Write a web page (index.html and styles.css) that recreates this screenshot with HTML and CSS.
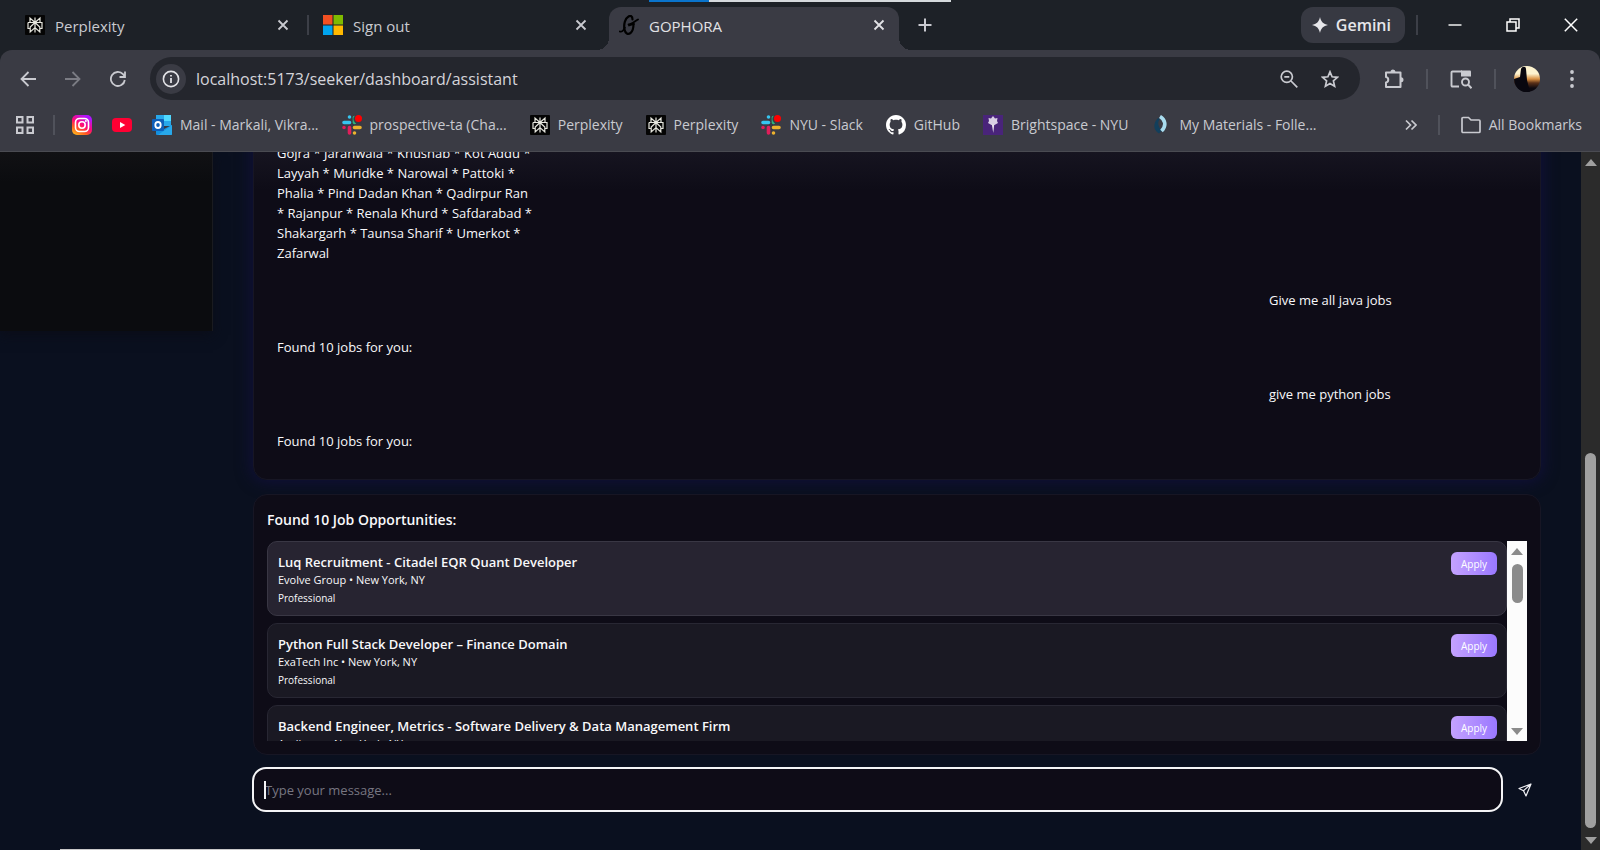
FILE: index.html
```html
<!DOCTYPE html>
<html lang="en">
<head>
<meta charset="utf-8">
<title>GOPHORA</title>
<link rel="stylesheet" href="styles.css">
</head>
<body>
<svg class="symbols" aria-hidden="true">
  <symbol id="perplexity" viewBox="0 0 20 20"><rect width="20" height="20" rx="1" fill="#050505"/><path d="M10 2.500v15M10 7.500 5 3v4.500M10 7.500 15 3v4.500M3 7.500h14v6h-2.200M3 7.500v6h2.200M10 7.500l-4.800 4.600V17L10 12.600M10 7.500l4.800 4.600V17L10 12.600" fill="none" stroke="#e8e8e0" stroke-width="1.200"/></symbol>
  <symbol id="slack" viewBox="0 0 20 20"><g stroke-width="3.600" stroke-linecap="round"><path d="M2 7.500h5.500M7.500 2h.01" stroke="#36c5f0"/><path d="M12.500 2.500v5" stroke="#2eb67d"/><path d="M12.500 12.500H18M12.500 18h.01" stroke="#ecb22e"/><path d="M7.500 12.500V18M2 12.500h.01" stroke="#e01e5a"/></g><circle cx="16" cy="4" r="4.600" fill="#3a3b44"/><circle cx="16.500" cy="3.500" r="3.500" fill="#f00"/></symbol>
  <symbol id="close" viewBox="0 0 12 12"><path d="M1.500 1.500l9 9M10.500 1.500l-9 9" fill="none" stroke="currentColor" stroke-width="1.800"/></symbol>
  <symbol id="arrow-up" viewBox="0 0 12 7"><path d="M6 0l6 7H0z" fill="currentColor"/></symbol>
  <symbol id="arrow-down" viewBox="0 0 12 7"><path d="M6 7l6-7H0z" fill="currentColor"/></symbol>
</svg>

<div class="window-progress"><span class="progress-done"></span></div>

<header class="browser">
  <div class="tab-strip">
    <div class="tab">
      <svg class="icon20"><use href="#perplexity"/></svg>
      <span class="tab-title">Perplexity</span>
      <button class="plain" aria-label="Close tab"><svg class="icon12"><use href="#close"/></svg></button>
    </div>
    <div class="tab tab-divided">
      <svg class="icon20" viewBox="0 0 20 20"><path fill="#f25022" d="M0 0h9.500v9.500H0z"/><path fill="#7fba00" d="M10.500 0H20v9.500h-9.500z"/><path fill="#00a4ef" d="M0 10.500h9.500V20H0z"/><path fill="#ffb900" d="M10.500 10.500H20V20h-9.500z"/></svg>
      <span class="tab-title">Sign out</span>
      <button class="plain" aria-label="Close tab"><svg class="icon12"><use href="#close"/></svg></button>
    </div>
    <div class="tab tab-active">
      <svg class="icon20" viewBox="0 0 20 20" fill="none" stroke="#000" stroke-linecap="round"><path d="M13.500 4.500C13.500 1 11.500.2 9.500 1.500 6 3.500 4.500 9.500 5.500 14.500c.8 4 3.500 5.300 6 3.500 2-1.500 3-5 3-9" stroke-width="2.200"/><path d="M.8 16.500c2 .8 4-1.300 5-4M9.500 9.500c3 .2 6-3 9.500-5M10 10.500l5-1.500" stroke-width="1.800"/></svg>
      <span class="tab-title">GOPHORA</span>
      <button class="plain" aria-label="Close tab"><svg class="icon12"><use href="#close"/></svg></button>
    </div>
    <button class="plain new-tab" aria-label="New tab"><svg class="icon14" viewBox="0 0 14 14"><path d="M7 .5v13M.5 7h13" stroke="currentColor" stroke-width="2"/></svg></button>
    <div class="window-tools">
      <button class="gemini"><svg class="icon16" viewBox="0 0 16 16"><path d="M8 0c.8 4.500 3.500 7.200 8 8-4.500.8-7.200 3.500-8 8-.8-4.500-3.500-7.200-8-8 4.500-.8 7.200-3.500 8-8z" fill="#e6e6ea"/></svg>Gemini</button>
      <span class="rule"></span>
      <div class="window-buttons">
        <button class="plain" aria-label="Minimise"><svg class="icon14" viewBox="0 0 14 14"><path d="M.5 7h13" stroke="#fff" stroke-width="1.400"/></svg></button>
        <button class="plain" aria-label="Restore"><svg class="icon14" viewBox="0 0 14 14" fill="none" stroke="#fff" stroke-width="1.500"><path d="M1 4h9v9H1zM4 4V1h9v9h-3"/></svg></button>
        <button class="plain" aria-label="Close window"><svg class="icon14" viewBox="0 0 14 14"><path d="M.8.800l12.400 12.400M13.200.8.800 13.200" stroke="#fff" stroke-width="1.500"/></svg></button>
      </div>
    </div>
  </div>

  <div class="toolbar">
    <nav class="history" aria-label="History">
      <button class="plain" aria-label="Back"><svg class="icon16" viewBox="0 0 16 16"><path d="M16 8H2M8.500 1 1.500 8l7 7" fill="none" stroke="currentColor" stroke-width="1.800"/></svg></button>
      <button class="plain faded" aria-label="Forward"><svg class="icon16" viewBox="0 0 16 16"><path d="M0 8h14M7.500 1l7 7-7 7" fill="none" stroke="currentColor" stroke-width="1.800"/></svg></button>
      <button class="plain" aria-label="Reload"><svg class="icon16" viewBox="0 0 16 16"><path d="M14.800 9A7 7 0 1 1 13 3.200L14.500 5M15 .5V6H9.500" fill="none" stroke="currentColor" stroke-width="1.800"/></svg></button>
    </nav>
    <div class="omnibox">
      <button class="plain site-info" aria-label="Site information"><svg class="icon18" viewBox="0 0 18 18"><circle cx="9" cy="9" r="7.600" fill="none" stroke="currentColor" stroke-width="1.600"/><path d="M9 8v5M9 5v1.600" stroke="currentColor" stroke-width="1.800"/></svg></button>
      <input class="address" type="text" aria-label="Address" value="localhost:5173/seeker/dashboard/assistant">
      <button class="plain" aria-label="Zoom out"><svg class="icon18" viewBox="0 0 18 18" fill="none" stroke="currentColor" stroke-width="1.700"><circle cx="6.800" cy="6.800" r="5.600"/><path d="M11 11l6.300 6.300M4.300 6.800h5"/></svg></button>
      <button class="plain" aria-label="Bookmark this page"><svg class="icon18" viewBox="0 0 18 18"><path d="M9 1.800l2.100 5 5.400.5-4.100 3.600 1.200 5.300L9 13.400l-4.600 2.800 1.200-5.300L1.500 7.300l5.400-.5z" fill="none" stroke="currentColor" stroke-width="1.700"/></svg></button>
    </div>
    <div class="toolbar-actions">
      <button class="plain" aria-label="Extensions"><svg class="icon20" viewBox="0 0 20 20"><path d="M2 3.500h14.500V18H2v-4.500c3-.5 3-5 0-5.500z" fill="none" stroke="currentColor" stroke-width="2" stroke-linejoin="round"/><path d="M6.500 3a2.500 2.500 0 0 1 5 0zM17 8.300a2.500 2.500 0 0 1 0 5z" fill="currentColor"/></svg></button>
      <span class="rule"></span>
      <button class="plain" aria-label="Search this page"><svg class="icon22" viewBox="0 0 22 20"><path d="M9 17.500H2.500a1 1 0 0 1-1-1v-13a1 1 0 0 1 1-1H12" fill="none" stroke="currentColor" stroke-width="1.900"/><path d="M11 1.500h9a1 1 0 0 1 1 1v5H11z" fill="currentColor"/><circle cx="15.500" cy="13" r="3.500" fill="none" stroke="currentColor" stroke-width="1.900"/><path d="M18 15.500l3.500 3.700" stroke="currentColor" stroke-width="2"/></svg></button>
      <span class="rule"></span>
      <button class="plain avatar" aria-label="Profile"><svg class="avatar-picture" viewBox="0 0 26 26"><defs><linearGradient id="dusk" x1="0" y1="0" x2="0" y2="1"><stop offset=".3" stop-color="#fdf3cf"/><stop offset=".5" stop-color="#d99143"/><stop offset=".65" stop-color="#5a3018"/><stop offset=".85" stop-color="#0c0910"/></linearGradient></defs><path fill="url(#dusk)" d="M0 0h26v26H0z"/><path fill="#08070f" d="M0 13l6-2 1-8c1-3 5-3 5 0l1 11 3 12H0z"/></svg></button>
      <button class="plain" aria-label="Menu"><svg class="dots" viewBox="0 0 4 18" fill="currentColor"><circle cx="2" cy="2" r="1.900"/><circle cx="2" cy="9" r="1.900"/><circle cx="2" cy="16" r="1.900"/></svg></button>
    </div>
  </div>

  <nav class="bookmarks" aria-label="Bookmarks">
    <button class="plain" aria-label="Tab groups"><svg class="icon18" viewBox="0 0 18 18" fill="none" stroke="currentColor" stroke-width="2"><path d="M1 1h5.500v5.500H1zM11.500 1H17v5.500h-5.500zM1 11.500h5.500V17H1zM11.500 11.500H17V17h-5.500z"/></svg></button>
    <span class="rule"></span>
    <a class="bookmark" href="#" aria-label="Instagram"><svg class="icon20" viewBox="0 0 20 20"><defs><linearGradient id="ig" x1="0" y1="1" x2=".6" y2="0"><stop offset="0" stop-color="#ffd21f"/><stop offset=".35" stop-color="#ff5a1f"/><stop offset=".6" stop-color="#ff0a78"/><stop offset="1" stop-color="#b014ff"/></linearGradient></defs><rect width="20" height="20" rx="5" fill="url(#ig)"/><g fill="none" stroke="#fff" stroke-width="1.600"><rect x="3.500" y="3.500" width="13" height="13" rx="4"/><circle cx="10" cy="10" r="3.200"/></g><circle cx="13.900" cy="6.100" r="1" fill="#fff"/></svg></a>
    <a class="bookmark" href="#" aria-label="YouTube"><svg class="icon20" viewBox="0 0 20 20"><rect y="3" width="20" height="14" rx="4" fill="#ff0033"/><path d="M8 7l5.300 3L8 13z" fill="#fff"/></svg></a>
    <a class="bookmark bookmark-titled" href="#"><svg class="icon20" viewBox="0 0 20 20"><path d="M4 0h15v11H4z" fill="#28a8ea"/><path d="M12 0h7v6h-7z" fill="#50d9ff"/><path d="M4 6h8v6H4z" fill="#0364b8"/><path d="M4 10l8 4 8-4v9a1 1 0 0 1-1 1H5a1 1 0 0 1-1-1z" fill="#1490df"/><path d="M20 10v9a1 1 0 0 1-1 1H6z" fill="#28a8ea"/><rect y="4" width="12" height="12" rx="1" fill="#0f5fb8"/><ellipse cx="6" cy="10" rx="2.700" ry="3" fill="none" stroke="#fff" stroke-width="1.800"/></svg>Mail - Markali, Vikra...</a>
    <a class="bookmark bookmark-titled" href="#"><svg class="icon20"><use href="#slack"/></svg>prospective-ta (Cha...</a>
    <a class="bookmark bookmark-titled" href="#"><svg class="icon20"><use href="#perplexity"/></svg>Perplexity</a>
    <a class="bookmark bookmark-titled" href="#"><svg class="icon20"><use href="#perplexity"/></svg>Perplexity</a>
    <a class="bookmark bookmark-titled" href="#"><svg class="icon20"><use href="#slack"/></svg>NYU - Slack</a>
    <a class="bookmark bookmark-titled" href="#"><svg class="icon20" viewBox="0 0 16 16"><path fill="#fff" d="M8 0C3.580 0 0 3.580 0 8c0 3.540 2.290 6.530 5.470 7.590.4.070.55-.17.55-.38 0-.19-.01-.82-.01-1.490-2.010.37-2.530-.49-2.690-.94-.09-.23-.48-.94-.82-1.130-.28-.15-.68-.52-.01-.53.630-.01 1.080.58 1.230.82.720 1.210 1.870.87 2.330.66.070-.52.280-.87.510-1.070-1.780-.2-3.640-.89-3.640-3.950 0-.87.310-1.590.82-2.150-.08-.2-.36-1.020.080-2.120 0 0 .67-.21 2.200.82.640-.18 1.320-.27 2-.27s1.360.09 2 .27c1.530-1.040 2.200-.82 2.200-.82.440 1.100.16 1.920.080 2.120.51.560.82 1.270.82 2.150 0 3.070-1.870 3.750-3.650 3.950.29.250.54.730.54 1.480 0 1.070-.01 1.930-.01 2.200 0 .21.150.46.550.38A8.010 8.010 0 0 0 16 8c0-4.420-3.580-8-8-8z"/></svg>GitHub</a>
    <a class="bookmark bookmark-titled" href="#"><svg class="icon20" viewBox="0 0 20 20"><path fill="#49247a" d="M0 0h20v20H0z"/><path d="M10 1l2 2.500 2.500-.5-.5 3 1 2-3.500 2h-3L5 8l1-2-.5-3L8 3.500z" fill="#d8cfe4"/><path d="M8.800 9.500h2.400L10.300 18z" fill="#e8e2ee"/></svg>Brightspace - NYU</a>
    <a class="bookmark bookmark-titled" href="#"><svg class="icon20" viewBox="0 0 20 20"><path d="M7 3C2 8 2 15 8 18.500l3-3C7 12 6 7 9 4z" fill="#123f5c"/><path d="M9 1.500c5 3 7 9 1.500 14.500" fill="none" stroke="#a9dcef" stroke-width="3.600"/></svg>My Materials - Folle...</a>
    <div class="bookmarks-end">
      <button class="plain" aria-label="More bookmarks"><svg class="icon12" viewBox="0 0 12 12"><path d="M1 1.500 5.500 6 1 10.500M6.500 1.500 11 6l-4.500 4.500" fill="none" stroke="currentColor" stroke-width="1.700"/></svg></button>
      <span class="rule"></span>
      <a class="bookmark" href="#"><svg class="icon20" viewBox="0 0 20 20"><path d="M1 3.500a1 1 0 0 1 1-1h5.500L10 5h8a1 1 0 0 1 1 1v10.500a1 1 0 0 1-1 1H2a1 1 0 0 1-1-1z" fill="none" stroke="currentColor" stroke-width="1.700"/></svg>All Bookmarks</a>
    </div>
  </nav>
</header>

<div class="viewport">
  <aside class="sidebar"></aside>
  <main class="assistant">
    <section class="panel chat" aria-label="Conversation">
      <p class="message">Gojra * Jaranwala * Khushab * Kot Addu *<br>Layyah * Muridke * Narowal * Pattoki *<br>Phalia * Pind Dadan Khan * Qadirpur Ran<br>* Rajanpur * Renala Khurd * Safdarabad *<br>Shakargarh * Taunsa Sharif * Umerkot *<br>Zafarwal</p>
      <p class="message message-own">Give me all java jobs</p>
      <p class="message">Found 10 jobs for you:</p>
      <p class="message message-own">give me python jobs</p>
      <p class="message">Found 10 jobs for you:</p>
    </section>

    <section class="panel jobs">
      <h2 class="jobs-heading">Found 10 Job Opportunities:</h2>
      <div class="jobs-frame">
        <div class="jobs-list">
          <article class="job job-hover">
            <div><h3 class="job-title">Luq Recruitment - Citadel EQR Quant Developer</h3><p class="job-place">Evolve Group • New York, NY</p><p class="job-level">Professional</p></div>
            <button class="apply">Apply</button>
          </article>
          <article class="job">
            <div><h3 class="job-title">Python Full Stack Developer – Finance Domain</h3><p class="job-place">ExaTech Inc • New York, NY</p><p class="job-level">Professional</p></div>
            <button class="apply">Apply</button>
          </article>
          <article class="job">
            <div><h3 class="job-title">Backend Engineer, Metrics - Software Delivery &amp; Data Management Firm</h3><p class="job-place">Andiamo • New York, NY</p></div>
            <button class="apply">Apply</button>
          </article>
        </div>
        <div class="scrollbar scrollbar-light"><svg class="scroll-arrow"><use href="#arrow-up"/></svg><div class="track"><span class="thumb thumb-list"></span></div><svg class="scroll-arrow"><use href="#arrow-down"/></svg></div>
      </div>
    </section>

    <form class="composer">
      <div class="composer-field"><input class="composer-input" type="text" aria-label="Message" placeholder="Type your message..."><span class="caret"></span></div>
      <button class="plain send" type="button" aria-label="Send"><svg class="icon14" viewBox="0 0 14 14"><path d="M13 1 1 5.500l4.500 2.200L8 13zM13 1 5.500 7.700" fill="none" stroke="#f0f0f4" stroke-width="1.200" stroke-linejoin="round"/></svg></button>
    </form>
  </main>
  <div class="scrollbar"><svg class="scroll-arrow"><use href="#arrow-up"/></svg><div class="track"><span class="thumb thumb-page"></span></div><svg class="scroll-arrow"><use href="#arrow-down"/></svg></div>
</div>
<div class="taskbar-edge"></div>
</body>
</html>
```
FILE: styles.css
```css
* { box-sizing: border-box; }

body {
  margin: 0;
  height: 100vh;
  display: flex;
  flex-direction: column;
  overflow: hidden;
  background: #1d2127;
  color: #f8f8fa;
  font-family: "Open Sans", "Noto Sans", sans-serif;
}

h2, h3, p { margin: 0; }
svg { display: block; flex: none; }
.symbols { position: absolute; width: 0; height: 0; }

.icon12 { width: 12px; height: 12px; }
.icon14 { width: 14px; height: 14px; }
.icon16 { width: 16px; height: 16px; }
.icon18 { width: 18px; height: 18px; }
.icon20 { width: 20px; height: 20px; }
.icon22 { width: 22px; height: 20px; }
.dots { width: 4px; height: 18px; }

.plain {
  display: flex;
  align-items: center;
  justify-content: center;
  flex: none;
  padding: 0;
  border: 0;
  background: none;
  color: inherit;
}

.rule { width: 2px; height: 20px; flex: none; background: #50525b; }

/* Browser chrome */
.window-progress {
  position: absolute;
  top: 0;
  left: 649px;
  width: 302px;
  height: 2px;
  background: #d5d9dc;
}
.progress-done { display: block; width: 20%; height: 2px; background: #0a74cc; }

.browser { flex: none; color: #c9cad0; font-size: 14px; }

.tab-strip { display: flex; height: 50px; padding: 7px 22px 0 13px; }
.tab {
  position: relative;
  display: flex;
  align-items: center;
  gap: 10px;
  width: 290px;
  height: 36px;
  margin-right: 8px;
  padding: 0 14px 0 12px;
}
.tab-title { flex: 1; padding-top: 2px; font-size: 15px; }
.tab-divided::before {
  content: "";
  position: absolute;
  left: -4px;
  top: 8px;
  width: 2px;
  height: 20px;
  background: #3c3f47;
}
.tab-active {
  height: 43px;
  padding: 0 14px 7px 10px;
  border-radius: 12px 12px 0 0;
  background: #3a3b44;
  color: #e2e2e6;
}
.tab-active::before, .tab-active::after {
  content: "";
  position: absolute;
  bottom: 0;
  width: 12px;
  height: 12px;
}
.tab-active::before { right: 100%; background: radial-gradient(circle at 0 0, #1d2127 12px, #3a3b44 12px); }
.tab-active::after { left: 100%; background: radial-gradient(circle at 100% 0, #1d2127 12px, #3a3b44 12px); }
.new-tab { height: 36px; margin-left: 11px; }

.window-tools { display: flex; align-items: center; height: 36px; margin-left: auto; }
.window-tools .rule { background: #3c3f47; }
.gemini {
  display: flex;
  align-items: center;
  gap: 8px;
  height: 36px;
  margin-right: 11px;
  padding: 0 14px 0 11px;
  border: 0;
  border-radius: 12px;
  background: #373942;
  color: #e6e6ea;
  font: 600 16px "Open Sans", "Noto Sans", sans-serif;
}
.window-buttons { display: flex; gap: 44px; margin-left: 30px; }

.toolbar {
  display: flex;
  align-items: center;
  height: 54px;
  padding: 3px 26px 0 20px;
  border-radius: 12px 12px 0 0;
  background: #3a3b44;
}
.history { display: flex; gap: 29px; margin-right: 24px; }
.faded { color: #7b7c84; }
.omnibox {
  display: flex;
  align-items: center;
  flex: 1;
  gap: 23px;
  height: 43px;
  padding: 0 21px 0 6px;
  border-radius: 22px;
  background: #24262d;
}
.site-info { width: 30px; height: 30px; border-radius: 50%; background: #3a3b44; color: #e2e2e6; }
.address {
  flex: 1;
  min-width: 0;
  margin-left: -13px;
  padding: 0;
  border: 0;
  outline: 0;
  background: none;
  color: #d4d4da;
  font: 16px "Open Sans", "Noto Sans", sans-serif;
}
.toolbar-actions { display: flex; align-items: center; gap: 22px; margin-left: 24px; }
.avatar { width: 26px; height: 26px; border-radius: 50%; overflow: hidden; }
.avatar-picture { width: 26px; height: 26px; }
.toolbar-actions .avatar { margin: 0 8px 0 -4px; }

.bookmarks {
  display: flex;
  align-items: center;
  height: 48px;
  padding: 0 18px 6px 16px;
  border-bottom: 1px solid #4a4b52;
  background: #3a3b44;
  gap: 20px;
}
.bookmarks > .rule { margin: 0 -3px 0 -1px; }
.bookmark { display: flex; align-items: center; gap: 8px; color: inherit; text-decoration: none; white-space: nowrap; }
.bookmark-titled { margin-right: 3px; }
.bookmarks-end { display: flex; align-items: center; gap: 21px; margin-left: auto; }

/* Page */
.viewport { display: flex; flex: 1; min-height: 0; overflow: hidden; background: #0a101f; }
.sidebar {
  width: 213px;
  height: 179px;
  flex: none;
  border-right: 1px solid #1a1b20;
  background: linear-gradient(180deg, #111114, #0b0c0f 30px);
  box-shadow: 0 4px 12px #0b0d18;
}
.assistant {
  display: flex;
  flex: 1;
  flex-direction: column;
  justify-content: flex-end;
  min-width: 0;
  padding: 0 40px 38px;
}
.panel { flex: none; border: 1px solid #171624; border-radius: 14px; background: #0e0c17; }
.chat {
  display: flex;
  flex-direction: column;
  gap: 27px;
  margin-bottom: 14px;
  padding: 23px 23px 28px;
  background: linear-gradient(180deg, #171521 28px, #0e0c17 70px);
  box-shadow: 0 0 15px 2px #11103a;
}
.message { width: 20%; font-size: 13px; line-height: 20px; white-space: nowrap; }
.message-own { align-self: flex-end; }

.jobs { position: relative; margin-bottom: 12px; padding: 13px; }
.jobs-heading { margin-bottom: 9px; font-size: 14px; font-weight: 600; line-height: 24px; }
.jobs-frame { display: flex; height: 200px; }
.jobs-list { display: flex; flex: 1; flex-direction: column; gap: 7px; overflow: hidden; }
.job {
  display: flex;
  flex: none;
  align-items: flex-start;
  justify-content: space-between;
  min-height: 75px;
  padding: 10px 9px 7px 10px;
  border: 1px solid #282733;
  border-radius: 10px;
  background: #1a1923;
}
.job-hover { border-color: #393744; background: #272431; }
.job-title { font-size: 13px; font-weight: 600; line-height: 20px; }
.job-place { font-size: 11px; line-height: 16px; }
.job-level { font-size: 10px; line-height: 20px; }
.apply {
  width: 46px;
  height: 23px;
  padding: 0;
  border: 0;
  border-radius: 6px;
  background: linear-gradient(90deg, #c4a2ff, #9a78ff);
  color: #fff;
  font: 10px "Open Sans", "Noto Sans", sans-serif;
}

.scrollbar {
  display: flex;
  flex: none;
  flex-direction: column;
  align-items: center;
  width: 19px;
  padding: 7px 0 6px;
  background: #2b2b2b;
  color: #a0a0a0;
}
.scrollbar-light { width: 20px; background: #fcfcfc; color: #8b8b8b; }
.scroll-arrow { width: 12px; height: 7px; }
.track { display: flex; flex: 1; flex-direction: column; width: 11px; padding: 9px 0; }
.thumb { border-radius: 6px; background: currentColor; }
.thumb-list { height: 39px; }
.thumb-page { height: 375px; margin-top: auto; }

.composer { display: flex; align-items: center; }
.composer-field { position: relative; flex: 1; margin-left: -1px; }
.composer-input {
  display: block;
  width: 100%;
  height: 45px;
  padding: 0 11px;
  border: 2px solid #f4f4f6;
  border-radius: 14px;
  outline: 0;
  background: #0e0c17;
  color: #f2f2f5;
  font: 13px "Open Sans", "Noto Sans", sans-serif;
}
.composer-input::placeholder { color: #777681; }
.caret { position: absolute; left: 12px; top: 14px; width: 2px; height: 18px; background: #f4f4f6; }
.send { width: 38px; height: 38px; padding-left: 5px; }

.taskbar-edge {
  position: absolute;
  left: 60px;
  bottom: 0;
  width: 360px;
  height: 1px;
  background: #c9c9c9;
}
```
